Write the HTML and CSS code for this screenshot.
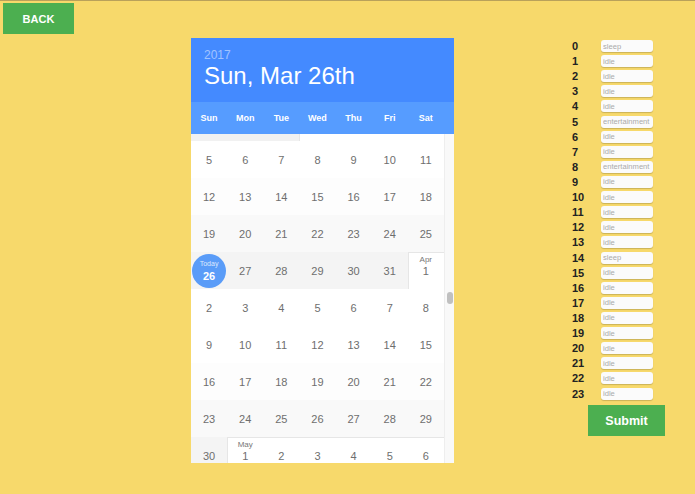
FILE: index.html
```html
<!DOCTYPE html>
<html>
<head>
  <meta charset="utf-8">
  <link rel="stylesheet" href="styles.css">
</head>
<body>
  <div class="page">
    <button class="back-btn">BACK</button>

    <div class="calendar">
      <div class="cal-header">
        <div class="cal-year">2017</div>
        <div class="cal-date">Sun, Mar 26th</div>
      </div>
      <div class="cal-weekdays">
        <span>Sun</span>
        <span>Mon</span>
        <span>Tue</span>
        <span>Wed</span>
        <span>Thu</span>
        <span>Fri</span>
        <span>Sat</span>
      </div>
      <div class="cal-body">
        <div class="cal-days">
          <!-- feb / mar, scrolled almost out of view -->
          <div class="week week-cut">
            <span class="day shade-4"></span>
            <span class="day shade-4"></span>
            <span class="day shade-4"></span>
            <span class="day first-day"></span>
            <span class="day first-row"></span>
            <span class="day first-row"></span>
            <span class="day first-row"></span>
          </div>
          <div class="week">
            <span class="day">5</span><span class="day">6</span><span class="day">7</span><span class="day">8</span><span class="day">9</span><span class="day">10</span><span class="day">11</span>
          </div>
          <div class="week shade-1">
            <span class="day">12</span><span class="day">13</span><span class="day">14</span><span class="day">15</span><span class="day">16</span><span class="day">17</span><span class="day">18</span>
          </div>
          <div class="week shade-2">
            <span class="day">19</span><span class="day">20</span><span class="day">21</span><span class="day">22</span><span class="day">23</span><span class="day">24</span><span class="day">25</span>
          </div>
          <!-- mar / apr -->
          <div class="week">
            <span class="day shade-3"><span class="today"><small>Today</small><b>26</b></span></span>
            <span class="day shade-3">27</span>
            <span class="day shade-3">28</span>
            <span class="day shade-3">29</span>
            <span class="day shade-3">30</span>
            <span class="day shade-3">31</span>
            <span class="day first-day"><em class="month-label">Apr</em>1</span>
          </div>
          <div class="week">
            <span class="day">2</span><span class="day">3</span><span class="day">4</span><span class="day">5</span><span class="day">6</span><span class="day">7</span><span class="day">8</span>
          </div>
          <div class="week">
            <span class="day">9</span><span class="day">10</span><span class="day">11</span><span class="day">12</span><span class="day">13</span><span class="day">14</span><span class="day">15</span>
          </div>
          <div class="week shade-1">
            <span class="day">16</span><span class="day">17</span><span class="day">18</span><span class="day">19</span><span class="day">20</span><span class="day">21</span><span class="day">22</span>
          </div>
          <div class="week shade-2">
            <span class="day">23</span><span class="day">24</span><span class="day">25</span><span class="day">26</span><span class="day">27</span><span class="day">28</span><span class="day">29</span>
          </div>
          <!-- apr / may -->
          <div class="week">
            <span class="day shade-3">30</span>
            <span class="day first-day"><em class="month-label">May</em>1</span>
            <span class="day first-row">2</span>
            <span class="day first-row">3</span>
            <span class="day first-row">4</span>
            <span class="day first-row">5</span>
            <span class="day first-row">6</span>
          </div>
        </div>
        <div class="cal-scrollbar">
          <div class="cal-thumb"></div>
        </div>
      </div>
    </div>

    <div class="hours">
      <div class="hour-row"><span class="hour-label">0</span><input class="hour-input" placeholder="sleep"></div>
      <div class="hour-row"><span class="hour-label">1</span><input class="hour-input" placeholder="idle"></div>
      <div class="hour-row"><span class="hour-label">2</span><input class="hour-input" placeholder="idle"></div>
      <div class="hour-row"><span class="hour-label">3</span><input class="hour-input" placeholder="idle"></div>
      <div class="hour-row"><span class="hour-label">4</span><input class="hour-input" placeholder="idle"></div>
      <div class="hour-row"><span class="hour-label">5</span><input class="hour-input" placeholder="entertainment"></div>
      <div class="hour-row"><span class="hour-label">6</span><input class="hour-input" placeholder="idle"></div>
      <div class="hour-row"><span class="hour-label">7</span><input class="hour-input" placeholder="idle"></div>
      <div class="hour-row"><span class="hour-label">8</span><input class="hour-input" placeholder="entertainment"></div>
      <div class="hour-row"><span class="hour-label">9</span><input class="hour-input" placeholder="idle"></div>
      <div class="hour-row"><span class="hour-label">10</span><input class="hour-input" placeholder="idle"></div>
      <div class="hour-row"><span class="hour-label">11</span><input class="hour-input" placeholder="idle"></div>
      <div class="hour-row"><span class="hour-label">12</span><input class="hour-input" placeholder="idle"></div>
      <div class="hour-row"><span class="hour-label">13</span><input class="hour-input" placeholder="idle"></div>
      <div class="hour-row"><span class="hour-label">14</span><input class="hour-input" placeholder="sleep"></div>
      <div class="hour-row"><span class="hour-label">15</span><input class="hour-input" placeholder="idle"></div>
      <div class="hour-row"><span class="hour-label">16</span><input class="hour-input" placeholder="idle"></div>
      <div class="hour-row"><span class="hour-label">17</span><input class="hour-input" placeholder="idle"></div>
      <div class="hour-row"><span class="hour-label">18</span><input class="hour-input" placeholder="idle"></div>
      <div class="hour-row"><span class="hour-label">19</span><input class="hour-input" placeholder="idle"></div>
      <div class="hour-row"><span class="hour-label">20</span><input class="hour-input" placeholder="idle"></div>
      <div class="hour-row"><span class="hour-label">21</span><input class="hour-input" placeholder="idle"></div>
      <div class="hour-row"><span class="hour-label">22</span><input class="hour-input" placeholder="idle"></div>
      <div class="hour-row"><span class="hour-label">23</span><input class="hour-input" placeholder="idle"></div>
      <button class="submit-btn">Submit</button>
    </div>
  </div>
</body>
</html>
```

FILE: styles.css
```css
html, body {
  margin: 0;
  height: 100%;
}

body {
  box-sizing: border-box;
  background-color: #f7d96b;
  border-top: 1px solid #b9a15a;
  font-family: 'Liberation Sans', Arial, sans-serif;
  color: #222;
  overflow: hidden;
}

.page {
  display: flex;
  align-items: flex-start;
}

button {
  background-color: #4caf50;
  color: white;
  border: none;
  border-radius: 0;
  font-family: 'Liberation Sans', Arial, sans-serif;
  font-weight: bold;
  cursor: pointer;
  padding: 0;
}

.back-btn {
  margin: 2px 0 0 3px;
  width: 71px;
  height: 31px;
  font-size: 11px;
}

/* calendar */
.calendar {
  margin: 37px 0 0 117px;
  width: 263px;
  height: 425px;
  background: white;
  overflow: hidden;
}

.cal-header {
  height: 64px;
  box-sizing: border-box;
  padding: 10.5px 13px 0;
  background-color: #448aff;
  color: white;
}

.cal-year {
  font-size: 12px;
  line-height: 13px;
  color: rgba(255, 255, 255, 0.5);
}

.cal-date {
  margin-top: 2px;
  font-size: 24px;
  line-height: 24px;
}

.cal-weekdays {
  display: grid;
  grid-template-columns: repeat(7, 36.14px);
  height: 32px;
  align-items: center;
  padding-right: 10px;
  background-color: #569cff;
  color: white;
  font-size: 9px;
  font-weight: bold;
  text-align: center;
}

.cal-body {
  display: flex;
  height: 329px;
  overflow: hidden;
}

.cal-days {
  width: 253px;
  overflow: hidden;
}

.week {
  display: grid;
  grid-template-columns: repeat(7, 36.14px);
  height: 37px;
}

.week-cut {
  margin-top: -30px;
}

.day {
  position: relative;
  display: flex;
  align-items: center;
  justify-content: center;
  font-size: 11px;
  color: #6e6e6e;
}

.shade-1 { background-color: #fdfdfd; }
.shade-2 { background-color: #f9f9f9; }
.shade-3 { background-color: #f4f4f4; }
.shade-4 { background-color: #f1f1f1; }

.first-row {
  background-color: white;
  box-shadow: inset 0 1px 0 #e6e6e6;
}

.first-day {
  background-color: white;
  box-shadow: inset 1px 1px 0 #e6e6e6;
}

.month-label {
  position: absolute;
  top: 3px;
  left: 0;
  right: 0;
  text-align: center;
  font-style: normal;
  font-size: 8px;
  line-height: 10px;
  color: #777;
}

.today {
  width: 34px;
  height: 34px;
  border-radius: 50%;
  background-color: #5a9cf8;
  color: white;
  display: flex;
  flex-direction: column;
  align-items: center;
  justify-content: center;
}

.today small {
  font-size: 7px;
  line-height: 8px;
  color: rgba(255, 255, 255, 0.8);
}

.today b {
  font-size: 11px;
  line-height: 12px;
  margin-top: 2px;
}

.cal-scrollbar {
  width: 10px;
  box-sizing: border-box;
  background-color: #f9f9f9;
  border-left: 1px solid #eee;
}

.cal-thumb {
  width: 6px;
  height: 12px;
  margin: 158px 0 0 2px;
  border-radius: 3px;
  background-color: #c0c0c0;
}

/* hours */
.hours {
  margin: 39px 0 0 118px;
}

.hour-row {
  display: flex;
  align-items: center;
  height: 12px;
  margin-bottom: 3.12px;
}

.hour-label {
  width: 29px;
  font-size: 11px;
  font-weight: bold;
  color: #222;
}

.hour-input {
  width: 52px;
  height: 12px;
  box-sizing: border-box;
  padding: 0 1px 0 2px;
  border: none;
  border-radius: 3px;
  background-color: #fbfbfb;
  box-shadow: 0 1px 1px rgba(0, 0, 0, 0.18);
  font-family: 'Liberation Sans', Arial, sans-serif;
  font-size: 7.6px;
  outline: none;
}

.hour-input::placeholder {
  color: #aaa;
}

.submit-btn {
  margin: 2.5px 0 0 16px;
  width: 77px;
  height: 31px;
  font-size: 12.5px;
}
```
